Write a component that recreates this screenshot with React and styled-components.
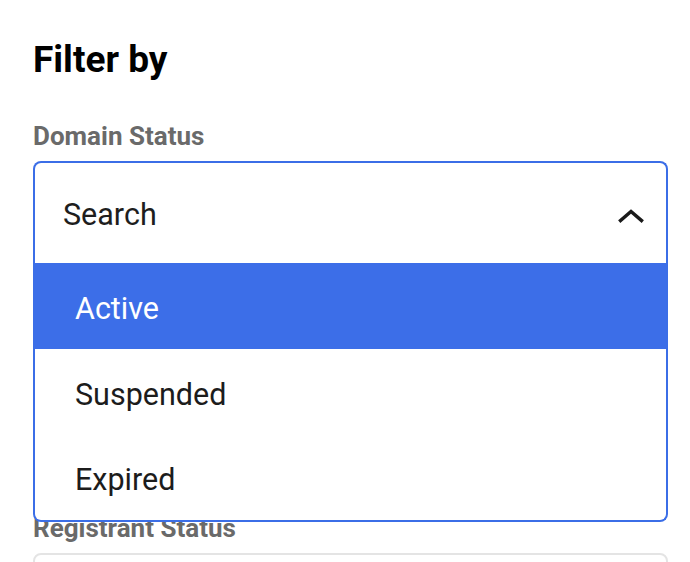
import styled, { createGlobalStyle } from "styled-components";

const GlobalStyle = createGlobalStyle`
  body {
    margin: 0;
    background: #ffffff;
    font-family: Roboto, "Liberation Sans", Arial, sans-serif;
  }
`;

const Panel = styled.aside`
  display: flex;
  flex-direction: column;
  width: 635px;
  padding: 38px 22px 0 33px;
`;

const Heading = styled.h2`
  margin: 0 0 40px;
  font-size: 37px;
  line-height: 44px;
  font-weight: 700;
  color: #000000;
`;

const Field = styled.div`
  display: flex;
  flex-direction: column;
  gap: 11px;
  margin-bottom: ${(p) => p.$spacing || 40}px;
`;

const Label = styled.label`
  font-size: 26px;
  line-height: 28px;
  font-weight: 700;
  color: #6a6a6a;
`;

const Select = styled.div`
  position: relative;
`;

const Control = styled.div`
  box-sizing: border-box;
  display: flex;
  align-items: center;
  justify-content: space-between;
  height: 102px;
  padding: 5px 22px 0 28px;
  background: #ffffff;
  border: 2px solid ${(p) => (p.$open ? "#3b6ee7" : "#e4e4e4")};
  border-bottom: ${(p) => (p.$open ? "none" : "2px solid #e4e4e4")};
  border-radius: ${(p) => (p.$open ? "8px 8px 0 0" : "8px")};
  font-size: 30.5px;
  color: #1e1e1e;
`;

const Placeholder = styled.span`
  line-height: 1;
`;

const Menu = styled.ul`
  position: absolute;
  top: 100%;
  left: 0;
  right: 0;
  z-index: 10;
  margin: 0;
  padding: 0;
  list-style: none;
  background: #ffffff;
  border: 2px solid #3b6ee7;
  border-top: none;
  border-radius: 0 0 8px 8px;
  overflow: hidden;
`;

const Option = styled.li`
  display: flex;
  align-items: center;
  height: 85.5px;
  box-sizing: border-box;
  padding: 6px 0 0 42px;
  margin: 0 -2px;
  font-size: 30.5px;
  color: ${(p) => (p.$active ? "#ffffff" : "#1c1c1c")};
  background: ${(p) => (p.$active ? "#3c6ee8" : "transparent")};
`;

function ChevronUp() {
  return (
    <svg width="26" height="14" viewBox="0 0 26 14" fill="none">
      <polyline
        points="2.5,11.5 13,2.5 23.5,11.5"
        stroke="#1a1a1a"
        strokeWidth="3.4"
        strokeLinecap="square"
      />
    </svg>
  );
}

const options = ["Active", "Suspended", "Expired"];

export default function App() {
  return (
    <>
      <GlobalStyle />
      <Panel>
        <Heading>Filter by</Heading>

        <Field $spacing={251}>
          <Label>Domain Status</Label>
          <Select>
            <Control $open>
              <Placeholder>Search</Placeholder>
              <ChevronUp />
            </Control>
            <Menu>
              {options.map((o, i) => (
                <Option key={o} $active={i === 0}>
                  {o}
                </Option>
              ))}
            </Menu>
          </Select>
        </Field>

        <Field>
          <Label>Registrant Status</Label>
          <Select>
            <Control />
          </Select>
        </Field>
      </Panel>
    </>
  );
}
